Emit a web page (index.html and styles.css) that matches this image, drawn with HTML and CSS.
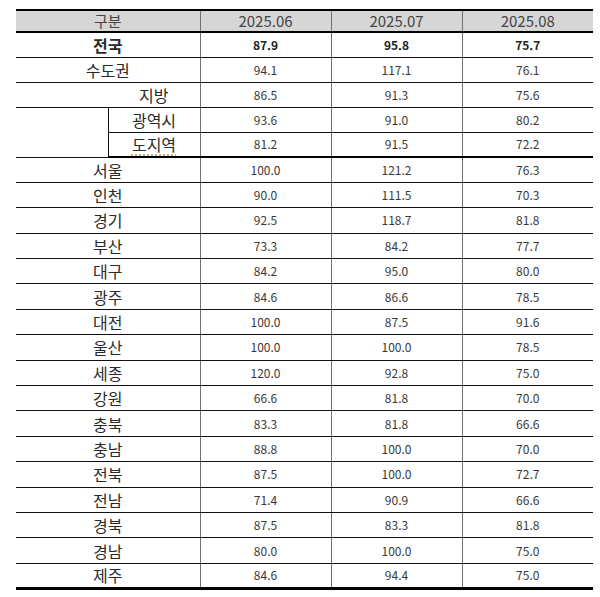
FILE: index.html
```html
<!DOCTYPE html>
<html lang="ko">
<head>
<meta charset="utf-8">
<title>지역별 지수</title>
<link rel="stylesheet" href="styles.css">
</head>
<body>
<table class="grid">
  <colgroup>
    <col class="c-sub"><col class="c-sub"><col class="c-num"><col class="c-num"><col class="c-num">
  </colgroup>
  <thead>
    <tr class="head">
      <th colspan="2">구분</th><th>2025.06</th><th>2025.07</th><th>2025.08</th>
    </tr>
  </thead>
  <tbody class="top">
    <tr class="strong"><td colspan="2" class="lbl">전국</td><td>87.9</td><td>95.8</td><td>75.7</td></tr>
    <tr><td colspan="2" class="lbl">수도권</td><td>94.1</td><td>117.1</td><td>76.1</td></tr>
    <tr><td class="blank"></td><td class="lbl nosep">지방</td><td>86.5</td><td>91.3</td><td>75.6</td></tr>
    <tr><td class="blank inner" rowspan="2"></td><td class="lbl">광역시</td><td>93.6</td><td>91.0</td><td>80.2</td></tr>
    <tr class="sect-end"><td class="lbl sub"><span class="spell">도지역</span></td><td>81.2</td><td>91.5</td><td>72.2</td></tr>
  </tbody>
  <tbody class="regions">
    <tr><td colspan="2" class="lbl">서울</td><td>100.0</td><td>121.2</td><td>76.3</td></tr>
    <tr><td colspan="2" class="lbl">인천</td><td>90.0</td><td>111.5</td><td>70.3</td></tr>
    <tr><td colspan="2" class="lbl">경기</td><td>92.5</td><td>118.7</td><td>81.8</td></tr>
    <tr><td colspan="2" class="lbl">부산</td><td>73.3</td><td>84.2</td><td>77.7</td></tr>
    <tr><td colspan="2" class="lbl">대구</td><td>84.2</td><td>95.0</td><td>80.0</td></tr>
    <tr><td colspan="2" class="lbl">광주</td><td>84.6</td><td>86.6</td><td>78.5</td></tr>
    <tr><td colspan="2" class="lbl">대전</td><td>100.0</td><td>87.5</td><td>91.6</td></tr>
    <tr><td colspan="2" class="lbl">울산</td><td>100.0</td><td>100.0</td><td>78.5</td></tr>
    <tr><td colspan="2" class="lbl">세종</td><td>120.0</td><td>92.8</td><td>75.0</td></tr>
    <tr><td colspan="2" class="lbl">강원</td><td>66.6</td><td>81.8</td><td>70.0</td></tr>
    <tr><td colspan="2" class="lbl">충북</td><td>83.3</td><td>81.8</td><td>66.6</td></tr>
    <tr><td colspan="2" class="lbl">충남</td><td>88.8</td><td>100.0</td><td>70.0</td></tr>
    <tr><td colspan="2" class="lbl">전북</td><td>87.5</td><td>100.0</td><td>72.7</td></tr>
    <tr><td colspan="2" class="lbl">전남</td><td>71.4</td><td>90.9</td><td>66.6</td></tr>
    <tr><td colspan="2" class="lbl">경북</td><td>87.5</td><td>83.3</td><td>81.8</td></tr>
    <tr><td colspan="2" class="lbl">경남</td><td>80.0</td><td>100.0</td><td>75.0</td></tr>
    <tr class="last"><td colspan="2" class="lbl">제주</td><td>84.6</td><td>94.4</td><td>75.0</td></tr>
  </tbody>
</table>
</body>
</html>
```

FILE: styles.css
```css
html, body {
  background: #ffffff;
}
body {
  margin: 9px 7px 0 16px;
  font-family: "Noto Sans CJK KR", "Noto Sans", sans-serif;
  color: #333;
}
.grid {
  width: 577px;
  border-collapse: collapse;
  table-layout: fixed;
  border-top: 2px solid #000;
  border-bottom: 3px solid #000;
}
.c-sub { width: 92px; }
.c-num { width: 131px; }

.grid th,
.grid td {
  padding: 0;
  text-align: center;
  vertical-align: middle;
  border-bottom: 1px solid #111;
  border-left: 1px solid #707070;
  font-size: 12px;
  line-height: 14px;
  color: #3a3a3a;
}
.grid th:first-child,
.grid td:first-child {
  border-left: none;
}
.head th {
  height: 20px;
  background: #d6d6d6;
  font-weight: normal;
  font-size: 15px;
  line-height: 18px;
  color: #444;
  border-bottom: 2px solid #000;
}
.grid td.lbl {
  font-size: 16px;
  line-height: 18px;
  color: #2a2a2a;
}
.top tr { height: 25px; }
.strong td { font-weight: bold; color: #222; }
.grid td.nosep { border-left: none; }
.grid td.inner { border-right: 1px solid #111; }
.grid td.inner + td.lbl { border-left: 1px solid #111; }
.grid td.lbl.sub { border-left: 1px solid #111; }
.sect-end td { border-bottom: 2px solid #000; }
.regions tr { height: 25.4px; }
.regions tr.last td { border-bottom: 3px solid #000; }
.spell {
  text-decoration: underline dotted #b9a25a;
  text-underline-offset: 3px;
}
```
